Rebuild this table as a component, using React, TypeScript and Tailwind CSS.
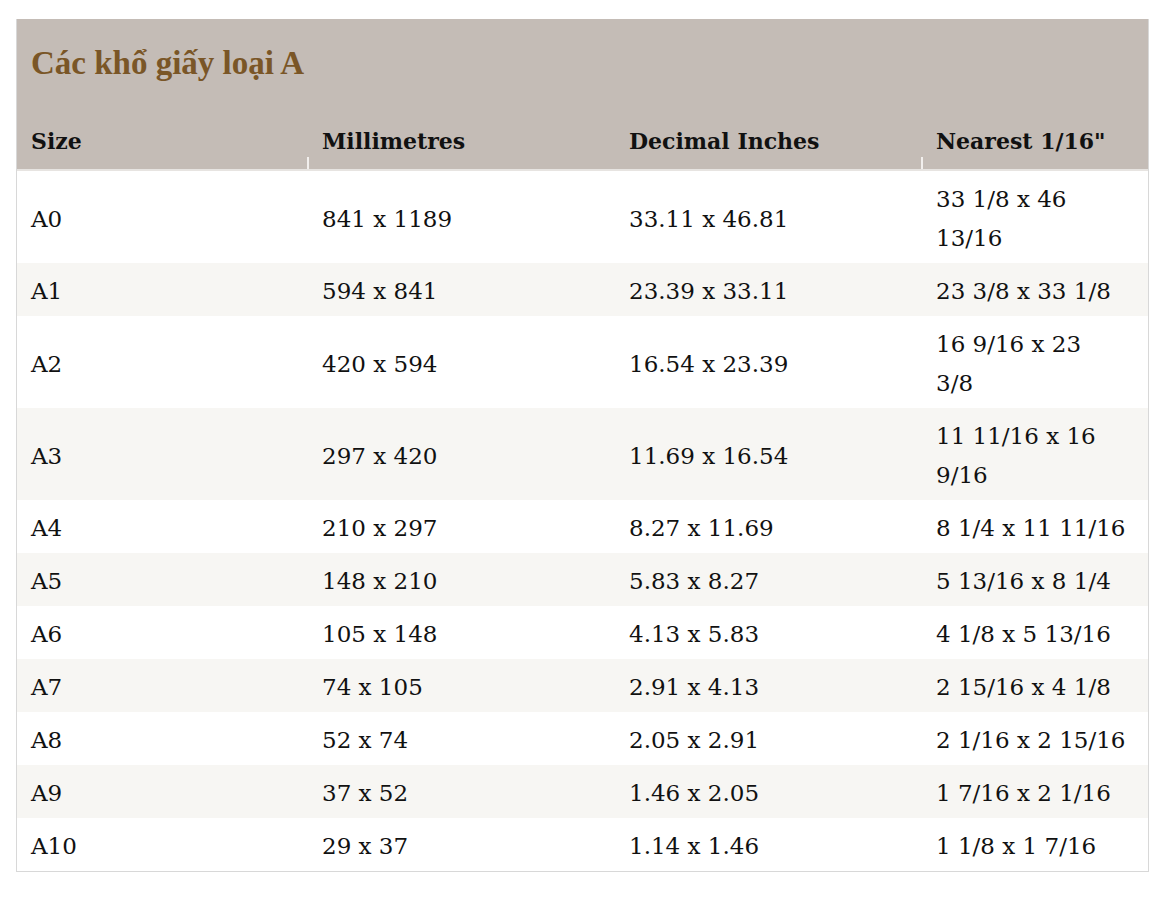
import React from "react";

const rows: { size: string; mm: string; inch: string; nearest: string[] }[] = [
  { size: "A0", mm: "841 x 1189", inch: "33.11 x 46.81", nearest: ["33 1/8 x 46", "13/16"] },
  { size: "A1", mm: "594 x 841", inch: "23.39 x 33.11", nearest: ["23 3/8 x 33 1/8"] },
  { size: "A2", mm: "420 x 594", inch: "16.54 x 23.39", nearest: ["16 9/16 x 23", "3/8"] },
  { size: "A3", mm: "297 x 420", inch: "11.69 x 16.54", nearest: ["11 11/16 x 16", "9/16"] },
  { size: "A4", mm: "210 x 297", inch: "8.27 x 11.69", nearest: ["8 1/4 x 11 11/16"] },
  { size: "A5", mm: "148 x 210", inch: "5.83 x 8.27", nearest: ["5 13/16 x 8 1/4"] },
  { size: "A6", mm: "105 x 148", inch: "4.13 x 5.83", nearest: ["4 1/8 x 5 13/16"] },
  { size: "A7", mm: "74 x 105", inch: "2.91 x 4.13", nearest: ["2 15/16 x 4 1/8"] },
  { size: "A8", mm: "52 x 74", inch: "2.05 x 2.91", nearest: ["2 1/16 x 2 15/16"] },
  { size: "A9", mm: "37 x 52", inch: "1.46 x 2.05", nearest: ["1 7/16 x 2 1/16"] },
  { size: "A10", mm: "29 x 37", inch: "1.14 x 1.46", nearest: ["1 1/8 x 1 7/16"] },
];

const cols = "grid grid-cols-[290px_307px_307px_1fr]";

export default function App() {
  return (
    <div className="min-h-screen bg-white pt-[19px] pl-[16px] font-['DejaVu_Serif',serif] text-[#111111]">
      <div className="w-[1133px] border-x border-b border-[#d8d8d8]">
        {/* Caption */}
        <div className="h-[85px] bg-[#c4bcb6] flex items-center pl-[14px] pt-[3px]">
          <h2 className="font-['Liberation_Serif',serif] font-bold text-[33px] text-[#7a5627] leading-none">
            Các khổ giấy loại A
          </h2>
        </div>

        {/* Header */}
        <div className={`${cols} h-[67px] bg-[#c4bcb6] border-b-2 border-[#e7e4e1] text-[22px] font-bold`}>
          <div className="flex items-center pl-[14px] pt-[9px]">Size</div>
          <div className="flex items-stretch">
            <div className="self-end h-[12px] w-[2px] bg-[#f2efed]" />
            <div className="flex items-center pl-[13px] pt-[9px]">Millimetres</div>
          </div>
          <div className="flex items-center pl-[15px] pt-[9px]">Decimal Inches</div>
          <div className="flex items-stretch">
            <div className="self-end h-[12px] w-[2px] bg-[#f2efed]" />
            <div className="flex items-center pl-[13px] pt-[9px]">Nearest 1/16"</div>
          </div>
        </div>

        {/* Rows */}
        {rows.map((r, i) => (
          <div
            key={r.size}
            className={`${cols} text-[23px] leading-[39px] ${i % 2 === 1 ? "bg-[#f7f6f3]" : "bg-white"}`}
          >
            <div className="flex items-center pl-[14px] pt-[9px] pb-[5px]">{r.size}</div>
            <div className="flex items-center pl-[15px] pt-[9px] pb-[5px]">{r.mm}</div>
            <div className="flex items-center pl-[15px] pt-[9px] pb-[5px]">{r.inch}</div>
            <div className="flex flex-col justify-center pl-[15px] pt-[9px] pb-[5px]">
              {r.nearest.map((line) => (
                <div key={line} className="whitespace-nowrap">
                  {line}
                </div>
              ))}
            </div>
          </div>
        ))}
      </div>
    </div>
  );
}
